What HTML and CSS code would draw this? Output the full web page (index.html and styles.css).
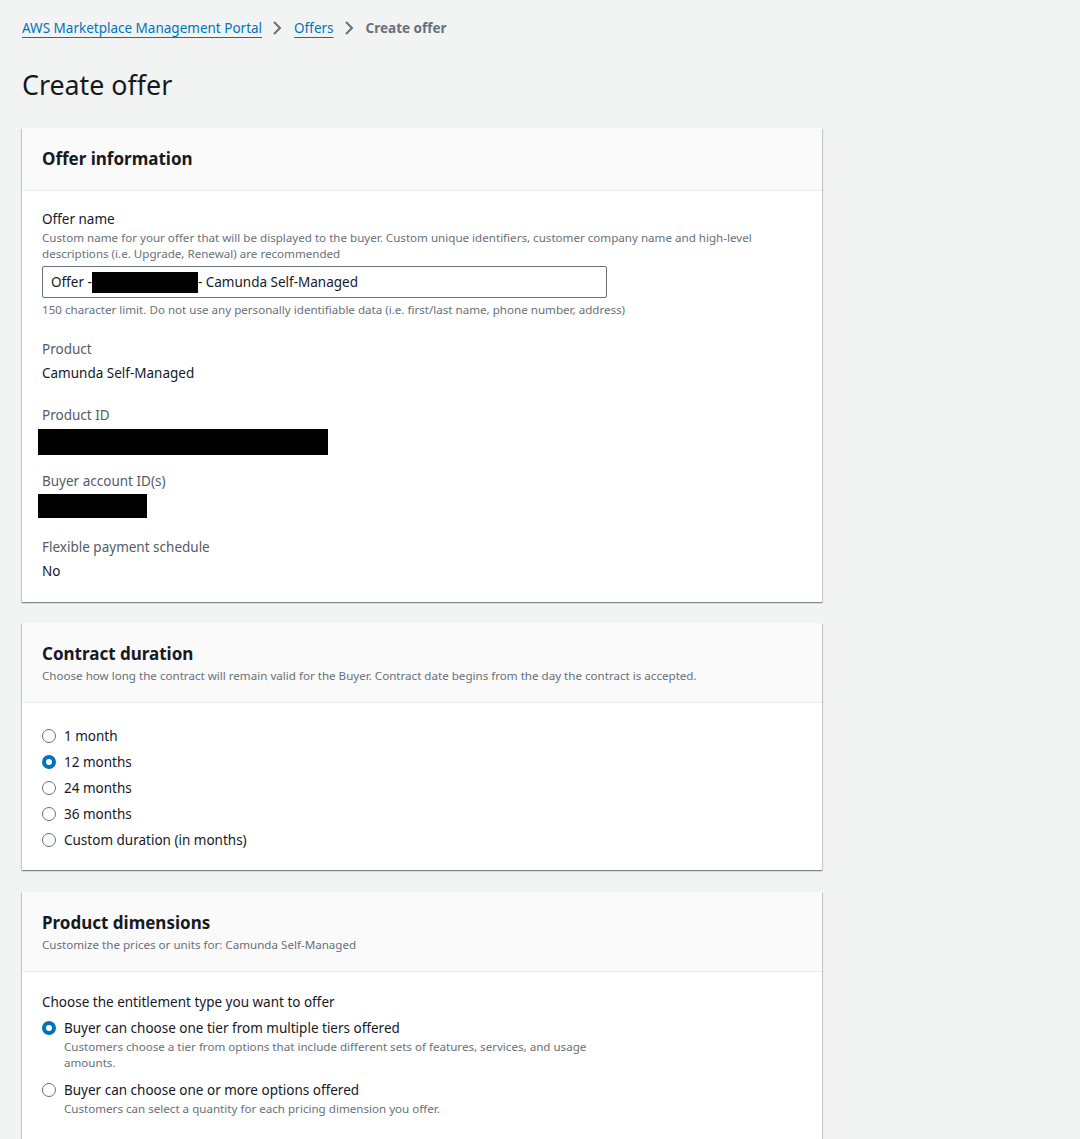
FILE: index.html
```html
<!DOCTYPE html>
<html>
<head>
<meta charset="utf-8">
<link rel="stylesheet" href="styles.css">
</head>
<body>
<div class="page">
  <nav class="crumbs">
    <a class="crumb-link" href="#">AWS Marketplace Management Portal</a>
    <svg class="chev" width="16" height="16" viewBox="0 0 16 16"><path d="M5 2l6 6-6 6" fill="none" stroke="#687078" stroke-width="2"/></svg>
    <a class="crumb-link" href="#">Offers</a>
    <svg class="chev" width="16" height="16" viewBox="0 0 16 16"><path d="M5 2l6 6-6 6" fill="none" stroke="#687078" stroke-width="2"/></svg>
    <span class="crumb-current">Create offer</span>
  </nav>

  <h1 class="title">Create offer</h1>

  <section class="card">
    <div class="card-head">
      <h2 class="card-title">Offer information</h2>
    </div>
    <div class="card-body info-body">
      <div class="field">
        <div class="label">Offer name</div>
        <div class="desc field-desc">Custom name for your offer that will be displayed to the buyer. Custom unique identifiers, customer company name and high-level descriptions (i.e. Upgrade, Renewal) are recommended</div>
        <div class="input"><span>Offer -</span><span class="redact-inline"></span><span>- Camunda Self-Managed</span></div>
        <div class="desc constraint">150 character limit. Do not use any personally identifiable data (i.e. first/last name, phone number, address)</div>
      </div>

      <div class="kv kv-product">
        <div class="k">Product</div>
        <div class="v">Camunda Self-Managed</div>
      </div>
      <div class="kv kv-pid">
        <div class="k">Product ID</div>
        <div class="redact redact-id"></div>
      </div>
      <div class="kv kv-buyer">
        <div class="k">Buyer account ID(s)</div>
        <div class="redact redact-buyer"></div>
      </div>
      <div class="kv kv-flex">
        <div class="k">Flexible payment schedule</div>
        <div class="v">No</div>
      </div>
    </div>
  </section>

  <section class="card duration-card">
    <div class="card-head">
      <h2 class="card-title">Contract duration</h2>
      <div class="head-desc">Choose how long the contract will remain valid for the Buyer. Contract date begins from the day the contract is accepted.</div>
    </div>
    <div class="card-body radios">
      <div class="radio"><span class="dot"></span><span class="rlabel">1 month</span></div>
      <div class="radio"><span class="dot on"></span><span class="rlabel">12 months</span></div>
      <div class="radio"><span class="dot"></span><span class="rlabel">24 months</span></div>
      <div class="radio"><span class="dot"></span><span class="rlabel">36 months</span></div>
      <div class="radio"><span class="dot"></span><span class="rlabel">Custom duration (in months)</span></div>
    </div>
  </section>

  <section class="card last">
    <div class="card-head">
      <h2 class="card-title">Product dimensions</h2>
      <div class="head-desc">Customize the prices or units for: Camunda Self-Managed</div>
    </div>
    <div class="card-body dims-body">
      <div class="label">Choose the entitlement type you want to offer</div>
      <div class="opt">
        <span class="dot on"></span>
        <div class="opt-text">
          <div class="rlabel">Buyer can choose one tier from multiple tiers offered</div>
          <div class="desc opt-desc">Customers choose a tier from options that include different sets of features, services, and usage amounts.</div>
        </div>
      </div>
      <div class="opt">
        <span class="dot"></span>
        <div class="opt-text">
          <div class="rlabel">Buyer can choose one or more options offered</div>
          <div class="desc opt-desc">Customers can select a quantity for each pricing dimension you offer.</div>
        </div>
      </div>
    </div>
  </section>
</div>
</body>
</html>
```

FILE: styles.css
```css
html, body {
  margin: 0;
  padding: 0;
  background: #f2f3f3;
}
body {
  font-family: "Noto Sans", "Open Sans", sans-serif;
  color: #16191f;
  font-size: 14px;
  line-height: 20px;
}
.page {
  padding: 18px 22px 0 22px;
  width: 800px;
}
.crumbs {
  display: flex;
  align-items: center;
  height: 20px;
}
.crumb-link {
  color: #0073bb;
  text-decoration: underline;
  text-underline-offset: 4px;
  font-size: 13.5px;
}
.chev {
  margin: 0 9px 0 7px;
  display: block;
}
.crumb-current {
  color: #687078;
  font-weight: 700;
  font-size: 13.5px;
}
.title {
  font-size: 26.8px;
  font-weight: 400;
  line-height: 36px;
  margin: 29px 0 25px 0;
  color: #16191f;
}
.card {
  background: #fff;
  box-shadow: 0 1px 1px 0 rgba(0,28,36,.3), 1px 1px 1px 0 rgba(0,28,36,.15), -1px 1px 1px 0 rgba(0,28,36,.15);
  margin-bottom: 21px;
}
.duration-card {
  margin-bottom: 22px;
}
.card-head {
  background: #fafafa;
  border-bottom: 1px solid #eaeded;
  padding: 18px 20px 18px 20px;
}
.card-title {
  margin: 0;
  font-size: 17px;
  font-weight: 700;
  line-height: 26px;
}
.head-desc {
  font-size: 11.6px;
  line-height: 16px;
  color: #687078;
  margin-top: 1px;
}
.card-body {
  padding: 18px 20px 21px 20px;
}
.label {
  font-size: 13.5px;
  line-height: 20px;
  color: #16191f;
}
.desc {
  font-size: 11.6px;
  line-height: 16px;
  color: #687078;
}
.field-desc {
  margin-top: 1px;
}
.input {
  margin-top: 4px;
  width: 547px;
  height: 30px;
  border: 1px solid #687078;
  border-radius: 2px;
  display: flex;
  align-items: center;
  padding: 0 8px;
  box-sizing: content-box;
  font-size: 13.5px;
  color: #16191f;
}
.input span { white-space: pre; }
.redact-inline {
  display: inline-block;
  width: 106px;
  height: 21px;
  background: #000;
}
.constraint {
  margin-top: 4px;
}
.k {
  color: #545b64;
  font-size: 13.5px;
  line-height: 20px;
}
.v {
  margin-top: 4px;
  font-size: 13.5px;
  line-height: 20px;
}
.kv-product { margin-top: 21px; }
.kv-pid { margin-top: 22px; }
.kv-buyer { margin-top: 16px; }
.kv-flex { margin-top: 19px; }
.redact {
  background: #000;
  margin-left: -4px;
}
.redact-id {
  width: 290px;
  height: 26px;
  margin-top: 4px;
}
.redact-buyer {
  width: 109px;
  height: 24px;
  margin-top: 3px;
}
.radios {
  padding-top: 23px;
  padding-bottom: 20px;
  display: flex;
  flex-direction: column;
  gap: 6px;
}
.radio {
  display: flex;
  align-items: center;
  gap: 8px;
  height: 20px;
}
.dot {
  width: 12px;
  height: 12px;
  border: 1px solid #687078;
  border-radius: 50%;
  box-sizing: content-box;
  flex: none;
  background: #fff;
}
.dot.on {
  border: 4px solid #0073bb;
  width: 6px;
  height: 6px;
}
.rlabel {
  font-size: 13.5px;
  line-height: 20px;
  color: #16191f;
}
.dims-body {
  padding-top: 20px;
  padding-bottom: 40px;
}
.opt {
  display: flex;
  align-items: flex-start;
  gap: 8px;
  margin-top: 6px;
}
.opt .dot {
  margin-top: 3px;
}
.opt + .opt {
  margin-top: 9px;
}
.opt-text {
  width: 540px;
}
.opt-desc {
  margin-top: 1px;
}
.last {
  margin-bottom: 0;
}
```
